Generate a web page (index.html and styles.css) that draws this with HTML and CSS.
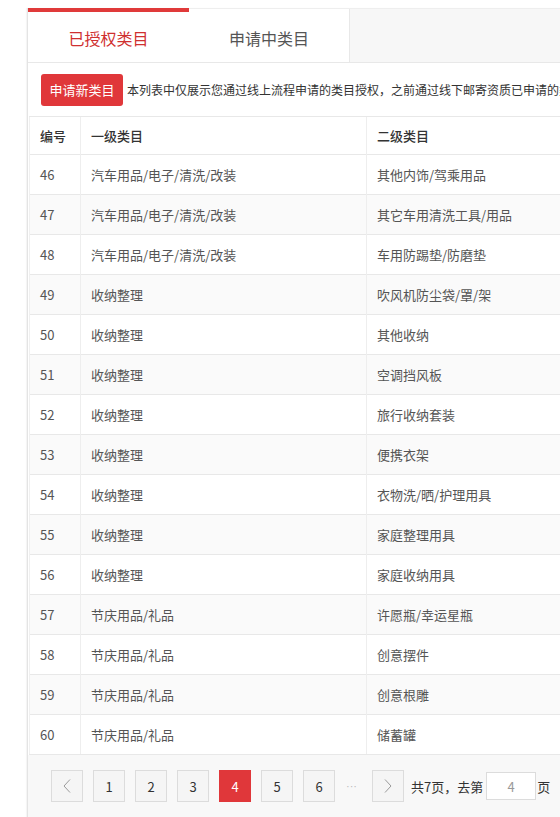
FILE: index.html
```html
<!DOCTYPE html>
<html lang="zh-CN">
<head>
<meta charset="utf-8">
<title>类目管理</title>
<link rel="stylesheet" href="styles.css">
</head>
<body>
<div class="wrap">
  <div class="tabs">
    <div class="tab tab-active">已授权类目</div>
    <div class="tab tab-normal">申请中类目</div>
  </div>
  <div class="toolbar">
    <button class="btn-apply">申请新类目</button>
    <span class="notice">本列表中仅展示您通过线上流程申请的类目授权，之前通过线下邮寄资质已申请的类目授权请在类目管理中查看</span>
  </div>
  <table class="grid">
    <thead>
      <tr><th class="c-no">编号</th><th class="c-one">一级类目</th><th class="c-two">二级类目</th><th class="c-three">三级类目</th></tr>
    </thead>
    <tbody>
      <tr><td>46</td><td>汽车用品/电子/清洗/改装</td><td>其他内饰/驾乘用品</td><td></td></tr>
      <tr><td>47</td><td>汽车用品/电子/清洗/改装</td><td>其它车用清洗工具/用品</td><td></td></tr>
      <tr><td>48</td><td>汽车用品/电子/清洗/改装</td><td>车用防踢垫/防磨垫</td><td></td></tr>
      <tr><td>49</td><td>收纳整理</td><td>吹风机防尘袋/罩/架</td><td></td></tr>
      <tr><td>50</td><td>收纳整理</td><td>其他收纳</td><td></td></tr>
      <tr><td>51</td><td>收纳整理</td><td>空调挡风板</td><td></td></tr>
      <tr><td>52</td><td>收纳整理</td><td>旅行收纳套装</td><td></td></tr>
      <tr><td>53</td><td>收纳整理</td><td>便携衣架</td><td></td></tr>
      <tr><td>54</td><td>收纳整理</td><td>衣物洗/晒/护理用具</td><td></td></tr>
      <tr><td>55</td><td>收纳整理</td><td>家庭整理用具</td><td></td></tr>
      <tr><td>56</td><td>收纳整理</td><td>家庭收纳用具</td><td></td></tr>
      <tr><td>57</td><td>节庆用品/礼品</td><td>许愿瓶/幸运星瓶</td><td></td></tr>
      <tr><td>58</td><td>节庆用品/礼品</td><td>创意摆件</td><td></td></tr>
      <tr><td>59</td><td>节庆用品/礼品</td><td>创意根雕</td><td></td></tr>
      <tr><td>60</td><td>节庆用品/礼品</td><td>储蓄罐</td><td></td></tr>
    </tbody>
  </table>
  <div class="pager">
    <span class="pg pg-arrow"><svg width="8" height="14" viewBox="0 0 8 14"><polyline points="7,0.5 1,7 7,13.5" fill="none" stroke="#9a9a9a" stroke-width="1"/></svg></span>
    <span class="pg">1</span>
    <span class="pg">2</span>
    <span class="pg">3</span>
    <span class="pg pg-cur">4</span>
    <span class="pg">5</span>
    <span class="pg">6</span>
    <span class="pg-dots">···</span>
    <span class="pg pg-arrow pg-next"><svg width="8" height="14" viewBox="0 0 8 14"><polyline points="1,0.5 7,7 1,13.5" fill="none" stroke="#9a9a9a" stroke-width="1"/></svg></span>
    <span class="pg-text">共7页，去第</span>
    <span class="pg-input">4</span>
    <span class="pg-text pg-unit">页</span>
    <span class="pg pg-go">确定</span>
  </div>
</div>
</body>
</html>
```
FILE: styles.css
```css
html, body {
  margin: 0;
  padding: 0;
  background: #ffffff;
  overflow: hidden;
}
body {
  font-family: "Noto Sans CJK SC", "Noto Sans", "Liberation Sans", sans-serif;
  color: #333;
}
.wrap {
  margin: 8px 0 0 27px;
  width: 780px;
  height: 809px;
  border-left: 1px solid #e4e4e4;
  box-shadow: -1px 0 1px rgba(0,0,0,0.04);
  display: flex;
  flex-direction: column;
}
.tabs {
  display: flex;
  height: 53px;
  background: #f7f7f7;
  border-top: 1px solid #eeeeee;
  border-bottom: 1px solid #e8e8e8;
  flex: none;
}
.tab {
  width: 161px;
  box-sizing: border-box;
  display: flex;
  align-items: center;
  justify-content: center;
  font-size: 16px;
  background: #ffffff;
}
.tab-active {
  color: #cf3030;
  border-top: 4px solid #e03a3a;
  margin-top: -1px;
  height: 54px;
  padding-top: 1px;
}
.tab-normal {
  color: #555;
  border-right: 1px solid #e8e8e8;
  padding-top: 4px;
}
.toolbar {
  height: 53px;
  flex: none;
  display: flex;
  align-items: center;
  padding-left: 13px;
  white-space: nowrap;
  overflow: hidden;
}
.btn-apply {
  flex: none;
  width: 82px;
  height: 32px;
  border: none;
  border-radius: 3px;
  background: #e0373a;
  color: #fff;
  font-family: inherit;
  font-size: 13px;
  padding: 0;
  margin-right: 4px;
}
.notice {
  font-size: 12px;
  color: #333;
}
.grid {
  margin-left: 1px;
  width: 760px;
  border-collapse: collapse;
  table-layout: fixed;
  font-size: 13px;
  flex: none;
}
.grid th, .grid td {
  text-align: left;
  padding: 0 0 0 10px;
  border-top: 1px solid #e8e8e8;
  border-left: 1px solid #eeeeee;
  white-space: nowrap;
}
.grid th:first-child, .grid td:first-child {
  border-left: 1px solid #f0f0f0;
}
.grid th {
  height: 37px;
  font-weight: 500;
  color: #333;
}
.grid td {
  height: 39px;
  color: #555;
}
.grid tbody tr:nth-child(even) td {
  background: #fafafa;
}
.grid tbody tr:last-child td {
  border-bottom: 1px solid #e8e8e8;
}
.c-no { width: 40px; }
.c-one { width: 275px; }
.c-two { width: 230px; }
.pager {
  flex: 1;
  background: #f8f8f8;
  display: flex;
  align-items: center;
  padding: 0 0 0 23px;
  white-space: nowrap;
}
.pg {
  flex: none;
  width: 32px;
  height: 32px;
  box-sizing: border-box;
  border: 1px solid #dcdcdc;
  background: #f5f5f5;
  display: flex;
  align-items: center;
  justify-content: center;
  font-size: 13px;
  color: #333;
  margin-right: 10px;
}
.pg-cur {
  background: #e0373a;
  border-color: #e0373a;
  color: #fff;
}
.pg-dots {
  flex: none;
  width: 17px;
  color: #bbb;
  font-family: "Liberation Sans", sans-serif;
  font-size: 11px;
  margin: 0 12px 0 -2px;
  text-align: center;
}
.pg-next {
  margin-right: 7px;
}
.pg-text {
  font-size: 13px;
  color: #333;
}
.pg-input {
  flex: none;
  width: 50px;
  height: 28px;
  box-sizing: border-box;
  border: 1px solid #dcdcdc;
  background: #fff;
  color: #999;
  font-size: 13px;
  display: flex;
  align-items: center;
  justify-content: center;
  margin: 0 1px 0 3px;
}
.pg-unit {
  margin-right: 11px;
}
.pg-go {
  width: 50px;
}
```
